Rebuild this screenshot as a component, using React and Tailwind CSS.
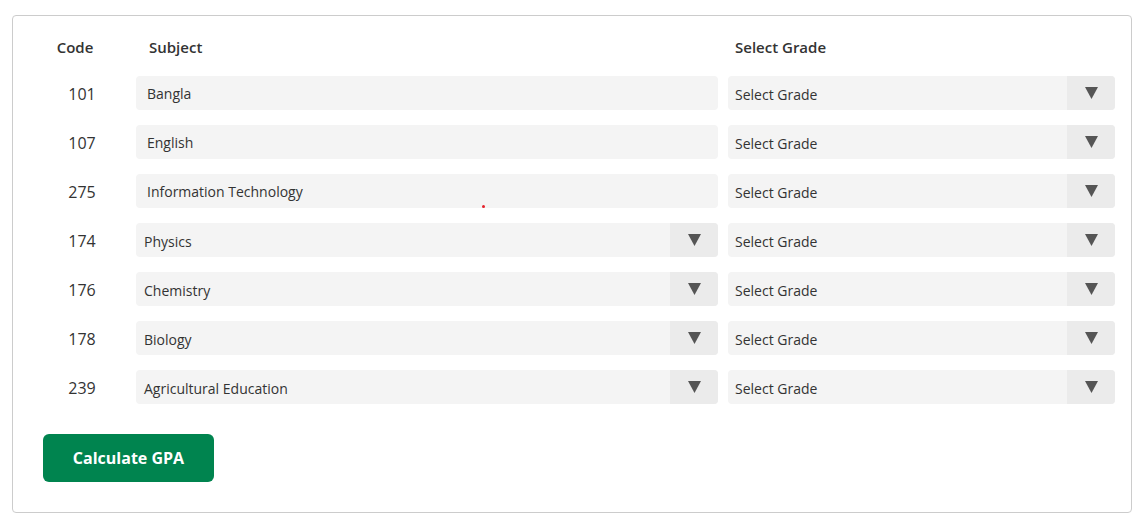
const subjects = [
  { code: '101', name: 'Bangla', fixed: true },
  { code: '107', name: 'English', fixed: true },
  { code: '275', name: 'Information Technology', fixed: true },
  { code: '174', name: 'Physics' },
  { code: '176', name: 'Chemistry' },
  { code: '178', name: 'Biology' },
  { code: '239', name: 'Agricultural Education' },
];

const Arrow = () => (
  <div className="w-[48px] h-full flex items-center justify-center bg-[#ebebeb] rounded-r-[4px]">
    <svg width="13" height="12" viewBox="0 0 13 12">
      <polygon points="0,0 13,0 6.5,12" fill="#555555" />
    </svg>
  </div>
);

const FakeSelect = ({ label, pad }) => (
  <div className="flex h-[34px] items-center bg-[#f4f4f4] rounded-[4px]">
    <span className={`flex-1 ${pad} pt-[2px] text-[14px] text-[#333]`}>{label}</span>
    <Arrow />
  </div>
);

export default function App() {
  return (
    <div className="min-h-screen bg-white pl-[12px] pr-[13px] pt-[15px]" style={{ fontFamily: '"Open Sans", "Noto Sans", sans-serif' }}>
      <div className="relative border border-[#cccccc] rounded-[4px] pl-[30px] pr-[16px] pt-[20px] pb-[30px]">
        <div className="grid grid-cols-[83px_1fr_387px] gap-x-[10px] h-[20px] items-center text-[15px] font-semibold text-[#333]">
          <div className="text-center pr-[19px]">Code</div>
          <div className="pl-[13px]">Subject</div>
          <div className="pl-[7px]">Select Grade</div>
        </div>

        <div className="flex flex-col gap-[15px] mt-[20px]">
          {subjects.map((s) => (
            <div key={s.code} className="grid grid-cols-[83px_1fr_387px] gap-x-[10px] items-center">
              <div className="text-center pr-[5px] pt-[1px] text-[16px] text-[#333]">{s.code}</div>
              {s.fixed ? (
                <div className="h-[34px] flex items-center bg-[#f4f4f4] rounded-[4px] pl-[11px] pt-[1px] text-[14px] text-[#333]">
                  {s.name}
                </div>
              ) : (
                <FakeSelect label={s.name} pad="pl-[8px]" />
              )}
              <FakeSelect label="Select Grade" pad="pl-[7px]" />
            </div>
          ))}
        </div>

        <button className="mt-[30px] w-[171px] h-[48px] rounded-[6px] bg-[#00844f] text-white font-bold text-[16px]">
          Calculate GPA
        </button>

        <span className="absolute left-[469px] top-[189px] w-[3px] h-[3px] rounded-full bg-[#e5202a]" />
      </div>
    </div>
  );
}
